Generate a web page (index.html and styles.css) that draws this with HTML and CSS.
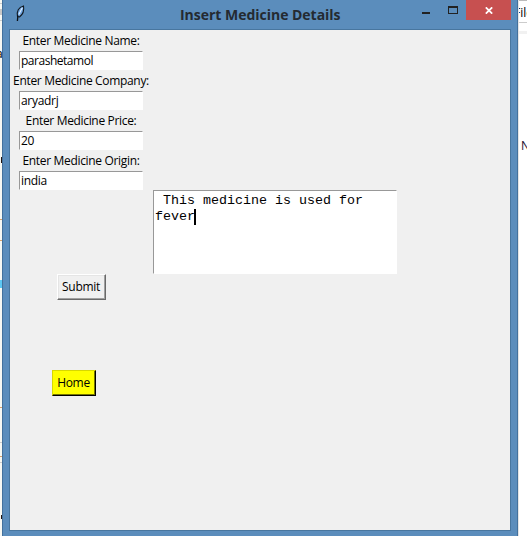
FILE: index.html
```html
<!DOCTYPE html>
<html lang="en">
<head>
<meta charset="utf-8">
<title>Insert Medicine Details</title>
<link rel="stylesheet" href="styles.css">
</head>
<body>
<div class="desktop">
  <div class="behind-left">
    <i class="mark shade m1"></i><i class="mark rule m2"></i><i class="mark rule m3"></i>
    <span class="frag f1">a</span><i class="mark dark m12"></i>
    <i class="mark orange m4"></i><i class="mark orange m5"></i><i class="mark cyan m6"></i>
    <i class="mark orange m7"></i><i class="mark rule m8"></i><i class="mark orange m9"></i><i class="mark rule m10"></i><i class="mark dark m11"></i>
  </div>
  <main class="window">
    <header class="titlebar">
      <svg class="feather" width="12" height="18" viewBox="0 0 12 18">
        <path d="M2.500 11.500C1.500 6.500 3.500 2 8.500 1c.8 4.500-.8 8.500-4 11z" fill="#6fa5e2" stroke="#101820" stroke-width="1.100"/>
        <path d="M2.900 10.500L2.400 16" fill="none" stroke="#0b1118" stroke-width="1.300"/>
        <path d="M7.300 2.800L3.800 9.500" stroke="#e4f2ff" stroke-width="1.100"/>
      </svg>
      <h1>Insert Medicine Details</h1>
      <div class="controls">
        <svg class="control" width="48" height="20" viewBox="0 0 48 20" shape-rendering="crispEdges">
          <path d="M4 12h8v2H4z" fill="#222"/>
          <path d="M30 6h10v8H30zM31 8v5h8V8z" fill="#222" fill-rule="evenodd"/>
        </svg>
        <div class="close"><svg width="8" height="7" viewBox="0 0 8 7"><path d="M.8.3l6.400 6.400M7.200.3L.8 6.700" stroke="#fff" stroke-width="1.700"/></svg></div>
      </div>
    </header>
    <form class="client">
      <div class="fields">
        <label><span>Enter Medicine Name:</span></label><div class="entry name">parashetamol</div>
        <label><span>Enter Medicine Company:</span></label><div class="entry">aryadrj</div>
        <label><span>Enter Medicine Price:</span></label><div class="entry">20</div>
        <label><span>Enter Medicine Origin:</span></label><div class="entry">india</div>
      </div>
      <div class="textbox"> This medicine is used for
fever<i class="caret"></i></div>
      <div class="button submit">Submit</div>
      <div class="button home">Home</div>
    </form>
  </main>
  <div class="behind-right">
    <div class="menu"><span>File</span></div>
    <div class="strip"></div>
    <span class="letter">N</span>
  </div>
</div>
</body>
</html>
```
FILE: styles.css
```css
* { box-sizing: border-box; }
body { margin: 0; overflow: hidden; background: #fff; font: 12px/16px "Open Sans", "Noto Sans", sans-serif; color: #000; }
.desktop { display: flex; width: 527px; height: 536px; overflow: hidden; }
.behind-left { position: relative; width: 2px; height: 536px; background: #f7f8f3; overflow: hidden; }
.mark { position: absolute; left: 0; width: 2px; height: 1px; }
.rule { background: #ccc; } .orange { background: #d9a16c; } .dark { left: 1px; background: #251510; height: 4px; }
.shade { background: #c8c8c8; height: 6px; } .cyan { background: #5cc8f4; height: 8px; }
.m1 { top: 9px; } .m2 { top: 3px; } .m3 { top: 20px; } .m4 { top: 219px; } .m5 { top: 240px; } .m6 { top: 280px; }
.m7 { top: 407px; } .m8 { top: 442px; } .m9 { top: 456px; } .m10 { top: 462px; } .m11 { top: 515px; } .m12 { top: 157px; height: 6px; }
.frag { position: absolute; left: -4px; } .f1 { top: 46px; }
.window { width: 516px; height: 536px; background: #5b8dbc; border: solid #43719d; border-width: 0 1px 0 1px; }
.titlebar { display: flex; height: 29px; align-items: flex-start; }
.feather { margin: 5px 0 0 12px; flex: none; }
h1 { width: 162px; margin: 4px 0 0 153px; font-size: 14px; line-height: 21px; font-weight: 700; color: #242a31; white-space: nowrap; letter-spacing: -.02px; }
.controls { display: flex; margin-left: auto; margin-right: 6px; }
.control { display: block; }
.close { display: flex; justify-content: center; align-items: center; width: 45px; height: 20px; padding-top: 1px; background: #c75050; }
.client { display: block; width: 502px; height: 502px; margin-left: 6px; background: #f0f0f0; border: 1px solid #48769f; }
.fields { display: grid; grid-template-rows: repeat(4, 21px 19px); width: 143px; }
label { display: flex; justify-content: center; line-height: 21px; white-space: nowrap; letter-spacing: -.33px; padding-right: 1px; }
.entry { width: 124px; height: 19px; margin-left: 9px; padding-left: 1px; line-height: 18px; background: #fff; border: 1px solid #fff; border-top-color: #989898; border-left-color: #989898; letter-spacing: -.3px; }
.name { letter-spacing: -.48px; }
.textbox { width: 244px; height: 84px; margin-left: 143px; padding: 2px 1px; background: #fff; border: 1px solid #fff; border-top-color: #989898; border-left-color: #989898; white-space: pre; font: 13.333px/16px "Liberation Mono", monospace; }
.caret { display: inline-block; width: 2px; height: 16px; margin-left: -1px; vertical-align: top; background: #000; }
.button { display: flex; justify-content: center; align-items: center; height: 26px; border: 1px solid; white-space: nowrap; letter-spacing: -.3px; padding-right: 1px; }
.submit { width: 49px; margin-left: 47px; border-color: #fff #696969 #696969 #fff; box-shadow: inset -1px -1px #a0a0a0, inset 1px 1px #e5e5e5; }
.home { width: 44px; margin: 70px 0 0 42px; background: #ff0; border-color: #d8d800 #000 #000 #d8d800; box-shadow: inset -1px -1px #777700; }
.behind-right { flex: 1; height: 536px; border-left: 1px solid #e4e4e4; overflow: hidden; }
.menu { height: 23px; padding: 4px 0 0; border-top: 1px solid #bbb; border-bottom: 1px solid #ccc; overflow: hidden; }
.menu span { display: block; margin-left: -5px; }
.strip { height: 3px; margin-top: 8px; background: #f1f1f1; }
.letter { display: block; margin: 104px 0 0 2px; color: #24102e; }
```
